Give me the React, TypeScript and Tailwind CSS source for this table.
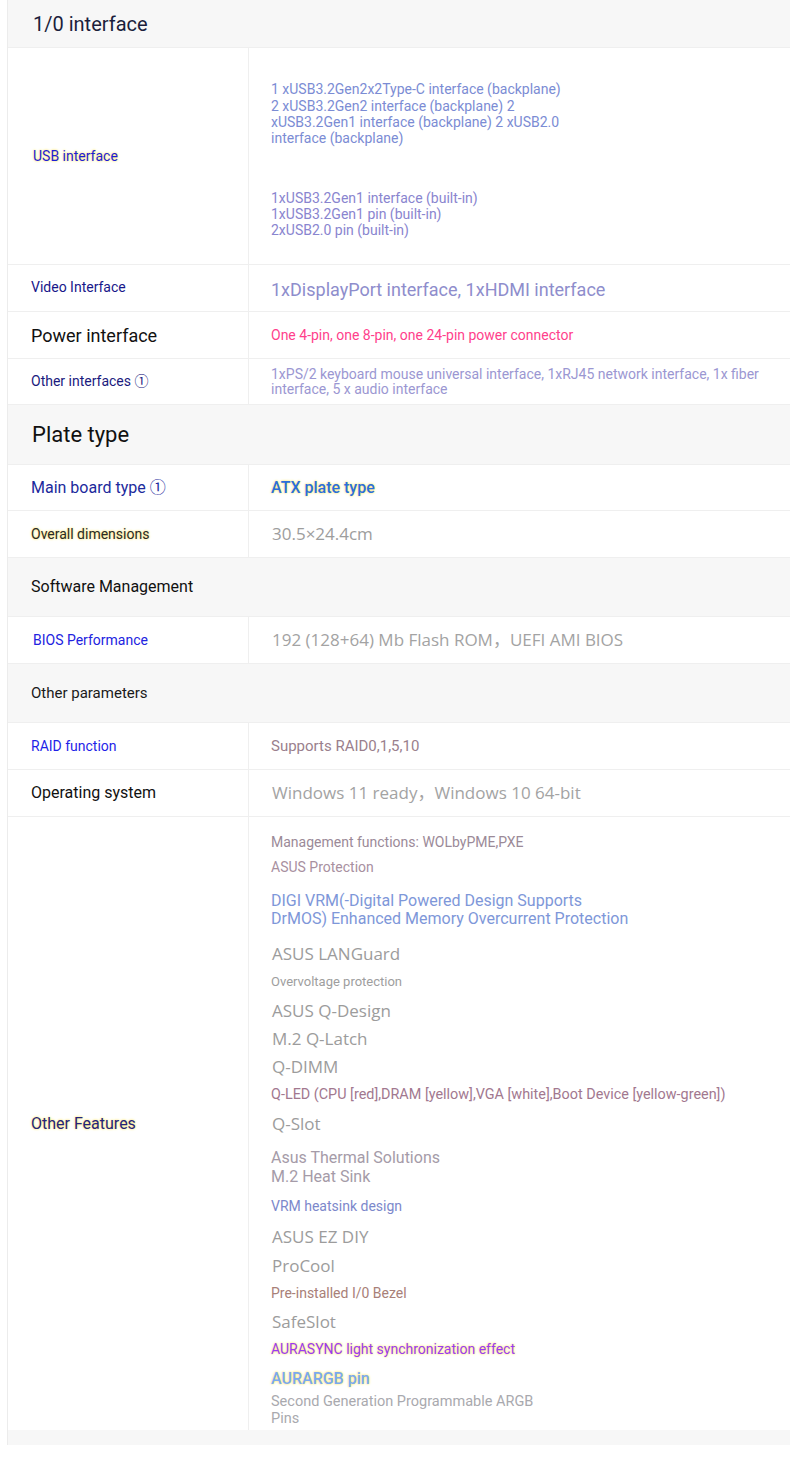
import React from "react";

const roboto = "font-['Roboto','Noto_Sans_CJK_SC',sans-serif]";
const open = "font-['Open_Sans','Noto_Sans_CJK_SC',sans-serif]";
const glow = "[text-shadow:0_0_2px_#ffe56a,0_0_3px_#fff0a0]";

function Section({ title, className }: { title: string; className: string }) {
  return (
    <div className={`flex items-center bg-[#f7f7f7] border-b border-[#efefef] ${className}`}>
      <span>{title}</span>
    </div>
  );
}

function Row({
  label,
  height,
  children,
  pad = "",
}: {
  label: React.ReactNode;
  height: string;
  children: React.ReactNode;
  pad?: string;
}) {
  return (
    <div className={`grid grid-cols-[241px_1fr] border-b border-[#efefef] ${height}`}>
      <div className="flex items-center pl-[23px] border-r border-[#efefef]">{label}</div>
      <div className={`flex flex-col justify-center pl-[22px] pr-2 ${pad}`}>{children}</div>
    </div>
  );
}

const big = `${open} text-[17px] leading-[28px] text-[#9c9c9c] pl-[1px]`;

export default function App() {
  return (
    <div className={`w-[790px] bg-white pl-[7px] ${roboto}`}>
      <div className="border-l border-[#ececec]">
        {/* I/O */}
        <Section title="1/0 interface" className="h-[48px] text-[20px] text-[#1b1e3c] pl-[25px]" />
        <Row
          label={<span className={`text-[14px] text-[#1e1ed6] ${glow} pl-[2px]`}>USB interface</span>}
          height="h-[217px]"
          pad="pt-[8px]"
        >
          <div className="w-[298px] text-[14px] leading-[16.4px] text-[#7b8cd4]">
            1 xUSB3.2Gen2x2Type-C interface (backplane) 2 xUSB3.2Gen2 interface (backplane) 2 xUSB3.2Gen1 interface (backplane) 2 xUSB2.0 interface (backplane)
          </div>
          <div className="mt-[43px] text-[14px] leading-[16.3px] text-[#8985cf]">
            <div>1xUSB3.2Gen1 interface (built-in)</div>
            <div>1xUSB3.2Gen1 pin (built-in)</div>
            <div>2xUSB2.0 pin (built-in)</div>
          </div>
        </Row>
        <Row label={<span className="text-[14px] text-[#17178a] -mt-[1px]">Video Interface</span>} height="h-[47px]">
          <span className="mt-[3px] text-[18px] text-[#8e8dcc]">1xDisplayPort interface, 1xHDMI interface</span>
        </Row>
        <Row label={<span className="text-[18px] text-[#111]">Power interface</span>} height="h-[47px]">
          <span className="text-[14px] text-[#ff3f8c]">One 4-pin, one 8-pin, one 24-pin power connector</span>
        </Row>
        <Row label={<span className="text-[14px] text-[#1a1a7e]">Other interfaces ①</span>} height="h-[46px]">
          <span className="text-[14px] leading-[15px] text-[#9b97d2]">
            1xPS/2 keyboard mouse universal interface, 1xRJ45 network interface, 1x fiber interface, 5 x audio interface
          </span>
        </Row>

        {/* Plate */}
        <Section title="Plate type" className="h-[60px] text-[22px] text-[#111] pl-[24px]" />
        <Row label={<span className="text-[16px] text-[#1c2a9c]">Main board type ①</span>} height="h-[46px]">
          <span className={`text-[16px] font-medium text-[#2b6fdc] ${glow}`}>ATX plate type</span>
        </Row>
        <Row label={<span className={`text-[14px] text-[#2a2a2a] ${glow}`}>Overall dimensions</span>} height="h-[47px]">
          <span className={`${open} text-[17px] text-[#9d9d9d] pl-[1px]`}>30.5×24.4cm</span>
        </Row>

        {/* Software */}
        <Section title="Software Management" className="h-[59px] text-[16px] text-[#111] pl-[23px]" />
        <Row label={<span className="text-[14px] text-[#2222e0] pl-[2px]">BIOS Performance</span>} height="h-[47px]">
          <span className={`${open} text-[17px] text-[#a3a3a3] pl-[1px]`}>192 (128+64) Mb Flash ROM，UEFI AMI BIOS</span>
        </Row>

        {/* Other */}
        <Section title="Other parameters" className="h-[59px] text-[15px] text-[#1a1a1a] pl-[23px]" />
        <Row label={<span className="text-[14px] text-[#1f1fe8]">RAID function</span>} height="h-[47px]">
          <span className="text-[15px] text-[#9a7f8d]">Supports RAID0,1,5,10</span>
        </Row>
        <Row label={<span className="text-[16px] text-[#111]">Operating system</span>} height="h-[47px]">
          <span className={`${open} text-[17px] text-[#a3a3a3] pl-[1px]`}>Windows 11 ready，Windows 10 64-bit</span>
        </Row>
        <div className="grid grid-cols-[241px_1fr] h-[613px]">
          <div className="flex items-center pl-[23px] border-r border-[#efefef]">
            <span className={`text-[16px] text-[#24247c] ${glow}`}>Other Features</span>
          </div>
          <div className="flex flex-col pl-[22px] pt-[13px]">
            <div className="text-[14px] leading-[24px] text-[#9b8a98]">Management functions: WOLbyPME,PXE</div>
            <div className="mt-px text-[14px] leading-[24px] text-[#a8909f]">ASUS Protection</div>
            <div className="mt-[13px] text-[16px] leading-[18px] text-[#7e97d9]">
              DIGI VRM(-Digital Powered Design Supports
              <br />
              DrMOS) Enhanced Memory Overcurrent Protection
            </div>
            <div className={`mt-[12px] ${big}`}>ASUS LANGuard</div>
            <div className="mt-[2px] text-[13px] leading-[24px] text-[#9e9e9e]">Overvoltage protection</div>
            <div className={`mt-[3px] ${big}`}>ASUS Q-Design</div>
            <div className={big}>M.2 Q-Latch</div>
            <div className={big}>Q-DIMM</div>
            <div className="text-[14.4px] leading-[28px] text-[#a2788f]">
              Q-LED (CPU [red],DRAM [yellow],VGA [white],Boot Device [yellow-green])
            </div>
            <div className={`mt-px ${big}`}>Q-Slot</div>
            <div className="mt-[10px] text-[16px] leading-[19px] text-[#a59ba8]">
              Asus Thermal Solutions
              <br />
              M.2 Heat Sink
            </div>
            <div className="mt-[8px] text-[14px] leading-[24px] text-[#7c88cb]">VRM heatsink design</div>
            <div className={`mt-[5px] ${big}`}>ASUS EZ DIY</div>
            <div className={`mt-px ${big}`}>ProCool</div>
            <div className="mt-px text-[14px] leading-[24px] text-[#a88078]">Pre-installed I/0 Bezel</div>
            <div className={`mt-[3px] ${big}`}>SafeSlot</div>
            <div className={`mt-px text-[14px] leading-[24px] text-[#9a3cf2] ${glow}`}>AURASYNC light synchronization effect</div>
            <div className={`mt-[4px] text-[16px] leading-[28px] font-medium text-[#7aa9f0] ${glow}`}>AURARGB pin</div>
            <div className="text-[14.5px] leading-[17px] text-[#a9a9ae]">
              Second Generation Programmable ARGB
              <br />
              Pins
            </div>
          </div>
        </div>
        <div className="h-[15px] bg-[#f7f7f7]" />
      </div>
      <div className="h-[16px]" />
    </div>
  );
}
